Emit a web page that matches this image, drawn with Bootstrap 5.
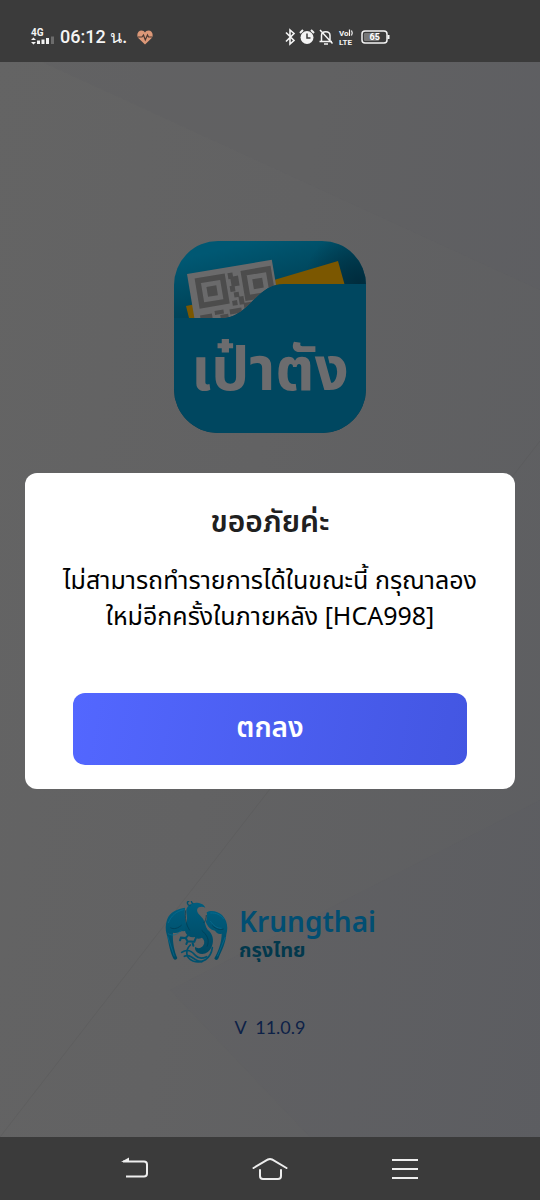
<!DOCTYPE html>
<html lang="th">
<head>
<meta charset="utf-8">
<meta name="viewport" content="width=device-width, initial-scale=1">
<title>เป๋าตัง</title>
<link href="https://cdn.jsdelivr.net/npm/bootstrap@5.3.0/dist/css/bootstrap.min.css" rel="stylesheet">
<style>
  body { font-family: "Noto Sans Thai", "Noto Sans", sans-serif; background: #636363; color: #000; }
  .splash { background: linear-gradient(100deg, #646464 0%, #626263 45%, #5d5e61 100%); }
  .backdrop-lines { inset: 0; width: 100%; height: 100%; }
  .sysbar { background: #3b3b3b; color: #f4f4f4; }
  .statusbar { height: 62px; padding: 12px 30px 0; font-family: Roboto, sans-serif; }
  .clock { font-size: 18px; line-height: 24px; margin-left: 5px; font-weight: 500; }
  .heart { margin-left: 10px; }
  .status-right { margin-left: 131px; }
  .app-icon { margin-top: 179px; width: 192px; height: 192px; }
  .notice { margin: 40px 25px 0; padding: 32px 48px 24px; border-radius: 12px; }
  .notice-title { font-size: 30px; line-height: 36px; font-weight: 600; color: #202020; margin-bottom: 22px; }
  .notice-text { font-size: 25px; line-height: 36px; margin: 0 -24px 58px; }
  .btn-ok { --bs-btn-color: #fff; --bs-btn-hover-color: #fff; --bs-btn-active-color: #fff; height: 72px; border: 0; border-radius: 12px; font-size: 28px; line-height: 36px; font-weight: 600; background: linear-gradient(100deg, #5367ff, #4356e2); }
  .bank { margin-top: 112px; gap: 11px; }
  .bank-name { font-family: "Noto Sans", sans-serif; font-weight: 600; font-size: 28px; line-height: 32px; color: #014e72; }
  .bank-thai { font-size: 20px; line-height: 28px; font-weight: 700; color: #02384c; }
  .version { margin-top: 46px; font-family: Lato, sans-serif; font-size: 18px; line-height: 32px; color: #0d2147; }
  .navkeys { height: 63px; padding: 0 108px; }
  .navkeys button { border: 0; width: 54px; height: 48px; line-height: 1; }
</style>
</head>
<body>
<div class="splash d-flex flex-column min-vh-100 position-relative">
  <svg class="backdrop-lines position-absolute" viewBox="0 0 540 1200" preserveAspectRatio="none" aria-hidden="true">
    <path d="M42 62L540 290V62z" fill="#585c66" opacity=".1"/>
    <path d="M0 1137L540 441" stroke="#555" stroke-width="1" opacity=".3"/>
    <path d="M170 990L310 1137H540V800z" fill="#555860" opacity=".06"/>
  </svg>

  <header class="sysbar statusbar d-flex align-items-center position-relative">
    <svg width="25" height="20" viewBox="0 0 25 20" fill="#f4f4f4" role="img" aria-label="4G">
      <text x="1" y="9" font-size="10" font-weight="700">4G</text>
      <path d="M1 13l2.500-2.500L6 13zM1 15l2.500 2.500L6 15zM7 13.500h3V17H7zM11.500 12.500h3V17h-3zM16 11h3v6h-3z"/>
      <path d="M21 9.500h3V17h-3z" fill="#6c6c6c"/>
    </svg>
    <span class="clock">06:12 น.</span>
    <svg class="heart" width="16" height="15" viewBox="0 0 16 15" aria-hidden="true">
      <path d="M8 14.500L2 8.800C-1.500 5 1 .5 4.500.5 6.200.5 7.300 1.300 8 2.400 8.700 1.300 9.800.5 11.500.5 15 .5 17.500 5 14 8.800z" fill="#dc9878"/>
      <path d="M1 7h4l1.500-2 1.800 5L10.500 5l1 2H15" fill="none" stroke="#4a3932" stroke-width="1.200"/>
    </svg>
    <div class="status-right d-flex align-items-center">
      <svg width="106" height="20" viewBox="0 0 106 20" fill="none" stroke="#f4f4f4" role="img" aria-label="65%">
        <path d="M2 5.500l8 8-4 3.500V3l4 3.500-8 8" stroke-width="1.600"/>
        <circle cx="23" cy="10.500" r="6.500" fill="#f4f4f4" stroke="none"/>
        <path d="M16 6l3-3M30 6l-3-3" stroke-width="2"/>
        <path d="M23 6.500V11h3.500" stroke="#3b3b3b" stroke-width="1.500"/>
        <path d="M37.500 14V8.500c0-5 8.500-5 8.500 0V14M35.500 14.500H48M40 17h4M36 3l12.500 13.500" stroke-width="1.500"/>
        <g fill="#f4f4f4" stroke="none" font-weight="700"><text x="55" y="9" font-size="8">Vo</text><text x="55" y="18" font-size="8">LTE</text></g>
        <path d="M65.500 2.500v6.500M67.500 3.500q1.500 2.500 0 5" stroke-width="1.200"/>
        <rect x="78" y="4" width="25" height="12" rx="3" stroke-width="1.500"/>
        <rect x="80" y="6" width="15" height="8" rx="1" fill="#777" stroke="none"/>
        <path d="M104.500 8v4" stroke-width="2"/>
        <text x="85.500" y="13" font-size="9" font-weight="700" fill="#fff" stroke="none">65</text>
      </svg>
    </div>
  </header>

  <main class="flex-grow-1 d-flex flex-column align-items-center position-relative text-center">
    <svg class="app-icon" viewBox="0 0 192 192" role="img" aria-label="เป๋าตัง">
      <defs>
        <clipPath id="tile"><rect width="192" height="192" rx="44"/></clipPath>
        <linearGradient id="back" gradientUnits="userSpaceOnUse" x1="80" y1="0" x2="100" y2="80"><stop offset="0" stop-color="#005873"/><stop offset=".6" stop-color="#00455b"/><stop offset="1" stop-color="#003a4f"/></linearGradient>
        <radialGradient id="corner" gradientUnits="userSpaceOnUse" cx="185" cy="42" r="55"><stop offset="0" stop-color="#002c3d"/><stop offset="1" stop-color="#002c3d" stop-opacity="0"/></radialGradient>
        <clipPath id="paper"><path d="M0 0h192v43H110C82 43 75 77 48 77H0z"/></clipPath>
      </defs>
      <g clip-path="url(#tile)">
        <path d="M0 0h192v192H0z" fill="url(#back)"/>
        <path d="M0 0h192v43H0z" fill="url(#corner)"/>
        <path d="M100 39L164 20l7 25h-71zM12 65l10-2v14h-7z" fill="#7b5700"/>
        <g clip-path="url(#paper)">
          <g transform="translate(13 33) rotate(-9.500)">
            <rect width="86" height="64" fill="#6a6a6b"/>
            <g fill="none" stroke="#4c4c4c">
              <path d="M9.500 8.500h25v25h-25zM56 8.500h25v25H56z" stroke-width="5.500"/>
            </g>
            <path d="M17 16h10v10H17zM63.500 16h10v10h-10zM40 6h5v4h5v10h-5v5h-5v-6h2v-7h-2zM43 26h5v5h-5zM47 31h5v8h-5zM40 34h5v5h-5zM6 43h12v6H6zM21 41h9v4h-9zM26 46h8v5h-8zM36 42h12v5H36zM51 38h8v5h-8zM10 49h8v4h-8z" fill="#4c4c4c"/>
          </g>
        </g>
        <path d="M0 77H48C75 77 82 43 110 43H192V192H0z" fill="#004760"/>
      </g>
      <text x="96" y="149" text-anchor="middle" font-size="60" font-weight="700" fill="#6c6c6e">เป๋าตัง</text>
    </svg>

    <section class="notice bg-white align-self-stretch" role="alertdialog" aria-labelledby="noticeTitle" aria-describedby="noticeText">
      <h1 class="notice-title" id="noticeTitle">ขออภัยค่ะ</h1>
      <p class="notice-text" id="noticeText">ไม่สามารถทำรายการได้ในขณะนี้ กรุณาลอง<br>ใหม่อีกครั้งในภายหลัง [HCA998]</p>
      <button type="button" class="btn btn-ok w-100">ตกลง</button>
    </section>

    <div class="bank d-flex align-items-center text-start">
      <svg width="64" height="64" viewBox="9 18 192 192" aria-hidden="true">
        <defs><linearGradient id="bird" x1="0" y1="0" x2="0" y2="1"><stop offset="0" stop-color="#005d7e"/><stop offset="1" stop-color="#004862"/></linearGradient></defs>
        <g fill="url(#bird)">
          <path d="M72 38C50 42 26 50 18 74c-5 16-5 30-1 44 6 24 9 50 19 70 4 8 10 8 13 1-9-20-15-48-13-76 10 2 20-1 27-5 8 3 13-2 17-8-8-18-10-40-8-62z"/>
          <path d="M137 52c12-9 36-3 46 8 16 16 19 38 13 58-2 26-13 48-23 70-3 8-10 9-13 2 13-22 22-50 22-74-9 3-16-2-20-9-14-2-22-13-28-27 5-8 5-18 3-28z"/>
          <path d="M76 44c4-15 20-24 38-20 9 2 16 6 19 14-9-5-21-4-24 4-4 11 9 19 17 29 7 10 7 24 14 33 15 12 20 30 13 49-8 22-28 29-43 20-6-4-9-10-8-17 9 6 20 4 25-5 5-8 3-17-4-23-9 5-17 4-22-2-12 2-20-2-25-9-8-11-2-26 1-38 3-12-2-23-1-35z"/>
        </g>
        <g fill="none" stroke="#00516e" stroke-linecap="round">
          <path d="M88 32c-11-2-11-12-4-14M95 25c-4-2-5-6-2-9" stroke-width="4"/>
          <path d="M84 118l-10 11-14-1-3 8M74 129l5 9M105 128l-5 12-20-1-4 8M94 140l3 12" stroke-width="6"/>
          <path d="M88 150c-14 14-17 38 8 48 26 9 54-6 58-40" stroke-width="5"/>
          <path d="M62 172c18-12 30-4 42 10 8 9 22 8 33 3M70 184c20-10 29 16 52 16" stroke-width="5"/>
        </g>
        <g fill="none" stroke="#087298" stroke-width="3" opacity=".6">
          <path d="M22 84c8-22 24-35 46-40M188 72c-9-13-23-19-40-18M21 116c15 8 28 4 39-10M148 78c9 14 20 22 34 22M20 124l20 60M193 126l-24 58"/>
        </g>
        <g fill="none" stroke="#003a50" stroke-width="3" opacity=".7">
          <path d="M74 46c-3 22 1 43 12 60M136 60c0 10-3 19-8 24M28 98c10 6 24 2 34-8M154 92c10 10 22 14 34 10M122 106c16 14 25 28 16 49"/>
        </g>
      </svg>
      <div class="pt-1">
        <div class="bank-name">Krungthai</div>
        <div class="bank-thai">กรุงไทย</div>
      </div>
    </div>
    <p class="version mb-0">V&nbsp; 11.0.9</p>
  </main>

  <nav class="sysbar navkeys d-flex justify-content-between align-items-center position-relative" aria-label="ระบบ">
    <button type="button" class="bg-transparent p-0" aria-label="ย้อนกลับ">
      <svg width="28" height="24" viewBox="0 0 28 24" fill="none" stroke="#eee" stroke-width="2"><path d="M2 4.500h21q3 0 3 3v9q0 3-3 3H5"/><path d="M0 5L8 .5v4.500z" fill="#eee" stroke="none"/></svg>
    </button>
    <button type="button" class="bg-transparent p-0" aria-label="หน้าหลัก">
      <svg width="36" height="24" viewBox="0 0 36 24" fill="none" stroke="#eee" stroke-width="2" stroke-linecap="round"><path d="M1.500 11L16 2.500q2-1 4 0L34.500 11M8 13v6q0 3 3 3h15q3 0 3-3v-6"/></svg>
    </button>
    <button type="button" class="bg-transparent p-0" aria-label="เมนู">
      <svg width="26" height="22" viewBox="0 0 26 22" stroke="#eee" stroke-width="2"><path d="M0 2h26M0 11h26M0 20h26"/></svg>
    </button>
  </nav>
</div>
<script src="https://cdn.jsdelivr.net/npm/bootstrap@5.3.0/dist/js/bootstrap.bundle.min.js"></script>
</body>
</html>
